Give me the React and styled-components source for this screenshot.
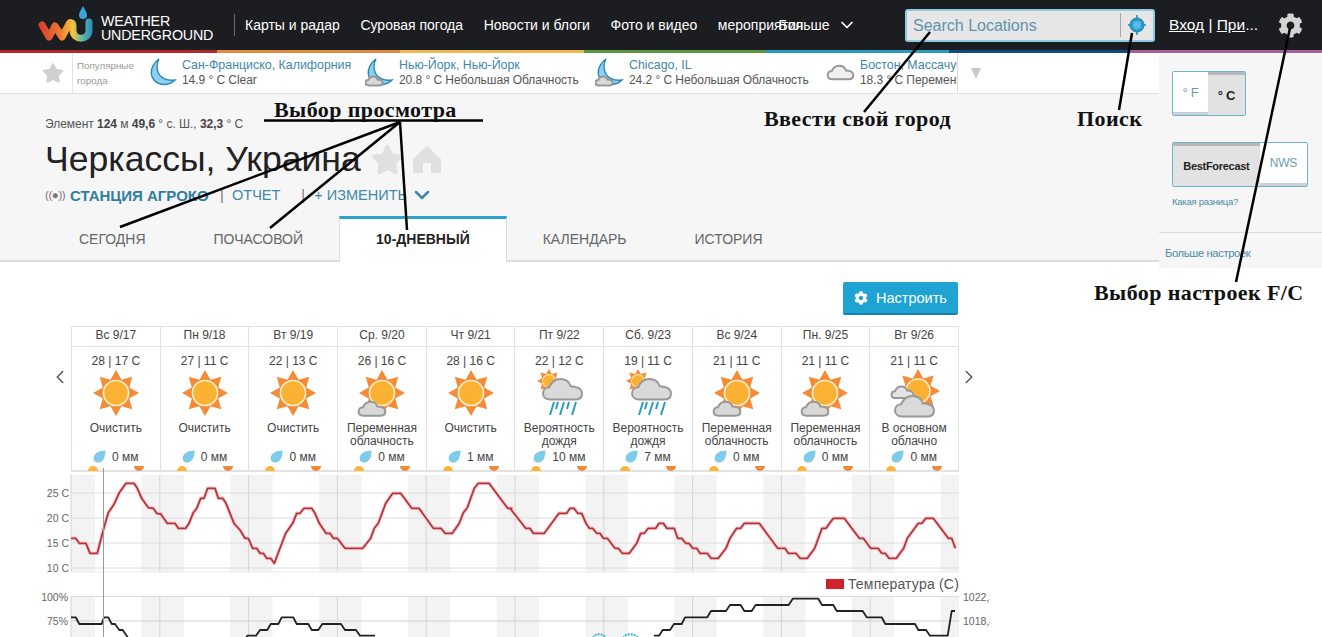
import React from "react";
import styled, { createGlobalStyle } from "styled-components";
import { ChevronDown, ChevronLeft, ChevronRight } from "lucide-react";
import { FaCog, FaStar } from "react-icons/fa";

const nav = ["Карты и радар", "Суровая погода", "Новости и блоги", "Фото и видео"];
const strip = [["#b0272d", 217], ["#de8a3f", 183], ["#eeb94f", 184], ["#5b9745", 182], ["#2b9cc0", 183], ["#0f4a87", 181], ["#a45f9c", 192]];

const cities = [
    { name: "Сан-Франциско, Калифорния", info: "14.9 ° C Clear", icon: "moon", width: 217 },
    { name: "Нью-Йорк, Нью-Йорк", info: "20.8 ° C Небольшая Облачность", icon: "moonCloud", width: 230 },
    { name: "Chicago, IL", info: "24.2 ° C Небольшая Облачность", icon: "moonCloud", width: 231 },
    { name: "Бостон, Массачусетс", info: "18.3 ° C Переменная", icon: "cloud", width: 200 },
];

const days = [
    { day: "Вс 9/17", temp: "28 | 17 C", icon: "clear", text: "Очистить", rain: "0 мм" },
    { day: "Пн 9/18", temp: "27 | 11 C", icon: "clear", text: "Очистить", rain: "0 мм" },
    { day: "Вт 9/19", temp: "22 | 13 C", icon: "clear", text: "Очистить", rain: "0 мм" },
    { day: "Ср. 9/20", temp: "26 | 16 C", icon: "partly", text: "Переменная облачность", rain: "0 мм" },
    { day: "Чт 9/21", temp: "28 | 16 C", icon: "clear", text: "Очистить", rain: "1 мм" },
    { day: "Пт 9/22", temp: "22 | 12 C", icon: "rain", text: "Вероятность дождя", rain: "10 мм" },
    { day: "Сб. 9/23", temp: "19 | 11 C", icon: "rain", text: "Вероятность дождя", rain: "7 мм" },
    { day: "Вс 9/24", temp: "21 | 11 C", icon: "partly", text: "Переменная облачность", rain: "0 мм" },
    { day: "Пн. 9/25", temp: "21 | 11 C", icon: "partly", text: "Переменная облачность", rain: "0 мм" },
    { day: "Вт 9/26", temp: "21 | 11 C", icon: "mostly", text: "В основном облачно", rain: "0 мм" },
];

// точки сняты с графика: x, y в координатах страницы
const z1 = (a) => a.map(([x, y]) => [40 + x / 3, 470 + y / 3]);
const z2 = (a) => a.map(([x, y]) => [510 + x / 3, 470 + y / 3]);

const tempLine = [
    ...z1([[93,205],[107,205],[118,220],[138,220],[150,250],[172,250],[190,180],[205,128],[222,103],[238,68],[258,40],[282,40],[292,55],[305,85],[325,113],[340,115],[350,130],[362,132],[382,160],[405,160],[415,175],[437,175],[447,160],[460,128],[470,115],[482,85],[492,85],[503,55],[525,55],[535,85],[548,85],[558,100],[582,160],[600,180],[615,205],[625,205],[638,235],[650,235],[660,250],[670,250],[680,265],[692,265],[703,280],[720,235],[737,190],[758,160],[770,130],[780,130],[792,115],[815,115],[825,130],[838,160],[858,190],[870,190],[880,205],[892,205],[915,235],[968,235],[992,205],[1003,175],[1015,160],[1037,100],[1058,70],[1082,70],[1115,115],[1137,115],[1180,175],[1203,175],[1215,190],[1237,190],[1258,160],[1270,128],[1282,113],[1303,55],[1315,40],[1347,40],[1403,115],[1415,115]]),
    ...z2([[0,115],[47,175],[60,175],[70,190],[103,190],[147,130],[170,130],[180,115],[192,115],[203,130],[215,130],[228,160],[238,175],[248,175],[260,190],[270,190],[280,205],[292,205],[315,235],[325,235],[337,250],[358,250],[380,220],[392,190],[403,190],[415,175],[437,175],[447,160],[460,160],[470,175],[493,175],[503,205],[515,205],[527,220],[537,220],[548,235],[560,235],[570,250],[592,250],[603,265],[625,265],[648,235],[660,205],[680,175],[692,175],[703,160],[748,160],[803,235],[825,235],[835,250],[858,250],[870,265],[892,265],[914,235],[936,175],[948,175],[970,145],[1003,145],[1048,205],[1060,205],[1082,235],[1104,235],[1115,250],[1126,250],[1137,265],[1159,265],[1181,235],[1192,205],[1225,160],[1236,160],[1247,145],[1270,145],[1315,205],[1325,205],[1336,235]]),
];

const pressureA = z1([[93,442],[107,442],[118,462],[185,462],[192,442],[205,442],[215,462],[225,462],[238,480],[248,480],[262,500],[270,520]]);
const pressureB = z1([[610,520],[622,497],[648,497],[660,480],[682,480],[692,462],[715,462],[725,442],[760,442],[770,462],[805,462],[815,480],[835,480],[847,462],[903,462],[915,480],[948,480],[960,497],[1005,497]]);
const pressureC = z2([[432,497],[447,497],[458,480],[480,480],[492,462],[515,462],[525,442],[592,442],[603,423],[648,423],[660,405],[692,405],[703,423],[725,423],[737,405],[836,405],[848,386],[925,386],[936,405],[970,405],[980,423],[1058,423],[1070,442],[1115,442],[1126,462],[1215,462],[1225,480],[1248,480],[1260,497],[1313,497],[1325,423],[1335,423]]);

const toPath = (pts, top) => pts.map(([x, y]) => `${(x - 71).toFixed(1)},${(y - top).toFixed(1)}`).join(" ");

const DAY = 88.8;
const dayIdx = [0, 1, 2, 3, 4, 5, 6, 7, 8, 9];

const GlobalStyle = createGlobalStyle`
    html, body { margin: 0; padding: 0; background: #fff; overflow: hidden; }
    body { font-family: "Liberation Sans", Arial, sans-serif; }
    a { text-decoration: none; }
`;

const Page = styled.div`
    position: relative;
    width: 1322px;
    height: 637px;
    overflow: hidden;
`;
const TopBar = styled.header`
    display: flex;
    align-items: center;
    height: 50px;
    background: #1c1d20;
    color: #fff;
    padding-left: 38px;
`;
const Brand = styled.div`
    display: flex;
    align-items: center;
    width: 196px;
    gap: 7px;
`;
const BrandName = styled.div`
    font-size: 14.3px;
    line-height: 14px;
    letter-spacing: -0.2px;
    padding-top: 5px;
`;
const NavList = styled.nav`
    display: flex;
    align-items: center;
    height: 22px;
    border-left: 1px solid #66686c;
    padding-left: 10px;
    gap: 20.6px;
    width: 659px;
    font-size: 14px;
    box-sizing: border-box;
`;
const NavItem = styled.span`
    white-space: nowrap;
`;
const NavOverflow = styled.span`
    white-space: nowrap;
    width: 40px;
`;
const MoreItem = styled.span`
    display: flex;
    align-items: center;
    gap: 7px;
    white-space: nowrap;
`;
const Search = styled.div`
    display: flex;
    align-items: center;
    width: 250px;
    height: 33px;
    box-sizing: border-box;
    background: #e6e6e6;
    border: 2px solid #8ecae3;
    border-radius: 3px;
    margin-left: 12px;
`;
const SearchInput = styled.span`
    flex: 1;
    color: #5f93ab;
    font-size: 16px;
    padding: 2px 0 0 6px;
`;
const SearchButton = styled.span`
    display: flex;
    align-items: center;
    justify-content: center;
    width: 32px;
    height: 24px;
    border-left: 1px solid #a9a9a9;
`;
const UserLinks = styled.div`
    margin-left: 14px;
    width: 106px;
    font-size: 15.5px;
    white-space: nowrap;
    a { color: #fff; text-decoration: underline; }
`;
const Gear = styled.span`
    display: flex;
    color: #d4d4d4;
    margin-left: 3px;
`;
const ColorStrip = styled.div`
    display: flex;
    height: 3px;
`;
const StripPart = styled.div`
    background: ${(p) => p.$color};
    width: ${(p) => p.$width}px;
`;
const Body = styled.div`
    display: grid;
    grid-template-columns: 1159px 163px;
    align-items: start;
`;
const CityBar = styled.div`
    display: flex;
    align-items: center;
    height: 40px;
    background: #fff;
`;
const CityStar = styled.span`
    display: flex;
    justify-content: flex-end;
    width: 72px;
    color: #cfcfcf;
    padding-right: 8px;
    box-sizing: border-box;
`;
const CityLabel = styled.div`
    display: flex;
    align-items: center;
    width: 76px;
    height: 40px;
    border-left: 1px solid #e4e4e4;
    box-sizing: border-box;
    padding-left: 4px;
    color: #999;
    font-size: 9.8px;
    line-height: 15px;
`;
const CityList = styled.div`
    display: flex;
    width: 810px;
    height: 40px;
    overflow: hidden;
    align-items: center;
    border-right: 1px solid #ddd;
    box-sizing: border-box;
`;
const City = styled.div`
    display: flex;
    align-items: center;
    flex: none;
    gap: 4px;
    width: ${(p) => p.$width}px;
`;
const CityText = styled.div`
    font-size: 12px;
    line-height: 15px;
    white-space: nowrap;
    color: #555;
    letter-spacing: -0.05px;
    a { color: #3f88a8; display: block; font-size: 12.4px; letter-spacing: 0; }
`;
const CityMore = styled.span`
    width: 0;
    height: 0;
    margin-left: 13px;
    border-left: 5px solid transparent;
    border-right: 5px solid transparent;
    border-top: 11px solid #c9c9c9;
`;
const Hero = styled.section`
    height: 169px;
    box-sizing: border-box;
    background: #f6f6f6;
    border-top: 1px solid #e0e0e0;
    border-bottom: 2px solid #ddd;
    padding: 23px 0 0 45px;
`;
const Meta = styled.div`
    font-size: 12px;
    line-height: 14px;
    color: #555;
    letter-spacing: -0.03px;
    b { color: #444; }
`;
const TitleRow = styled.div`
    display: flex;
    align-items: center;
    height: 40px;
    margin-top: 8px;
    gap: 9px;
    color: #e0e0e0;
`;
const Title = styled.h1`
    margin: 0 1px 0 0;
    font-size: 35.6px;
    font-weight: 400;
    color: #222;
    white-space: nowrap;
`;
const StationRow = styled.div`
    display: flex;
    align-items: center;
    height: 18px;
    margin-top: 7px;
    font-size: 14.5px;
    color: #3f88a8;
    white-space: nowrap;
`;
const Signal = styled.span`
    color: #777;
    font-size: 11.5px;
    letter-spacing: -0.4px;
    width: 25px;
`;
const Station = styled.b`
    color: #2f7e9f;
    font-size: 15px;
    width: 150px;
`;
const Sep = styled.span`
    color: #777;
    width: ${(p) => p.$width}px;
    margin-left: ${(p) => p.$left || 0}px;
`;
const EditChevron = styled(ChevronDown)`
    margin-left: 3px;
`;
const Tabs = styled.div`
    display: flex;
    margin: 12px 0 0 0;
    height: 46px;
`;
const Tab = styled.span`
    display: flex;
    align-items: center;
    justify-content: center;
    height: 46px;
    box-sizing: border-box;
    padding: ${(p) => (p.$active ? "0 36px 3px" : "0 34px")};
    margin: ${(p) => (p.$active ? "0 2px" : "0")};
    font-size: 14px;
    white-space: nowrap;
    color: ${(p) => (p.$active ? "#222" : "#666")};
    font-weight: ${(p) => (p.$active ? 700 : 400)};
    background: ${(p) => (p.$active ? "#fff" : "transparent")};
    border-top: ${(p) => (p.$active ? "3px solid #29a3c9" : "0")};
    border-left: ${(p) => (p.$active ? "1px solid #ddd" : "0")};
    border-right: ${(p) => (p.$active ? "1px solid #ddd" : "0")};
`;
const Forecast = styled.section`
    display: grid;
    grid-template-columns: 71px 888px 1fr;
`;
const Customize = styled.div`
    grid-column: 2;
    display: flex;
    justify-content: flex-end;
    padding: 20px 1px 11px 0;
`;
const CustomizeButton = styled.span`
    display: flex;
    align-items: center;
    gap: 8px;
    justify-content: center;
    width: 115px;
    height: 33px;
    box-sizing: border-box;
    border-bottom: 2px solid #1582ab;
    border-radius: 2px;
    background: #1ea3d3;
    color: #fff;
    font-size: 14.5px;
`;
const Arrow = styled.div`
    grid-column: ${(p) => (p.$right ? 3 : 1)};
    display: flex;
    align-items: flex-start;
    justify-content: ${(p) => (p.$right ? "flex-start" : "flex-end")};
    padding: 40px 0 0;
    margin-left: ${(p) => (p.$right ? "-1px" : "0")};
    color: #555;
`;
const DayTable = styled.div`
    grid-column: 2;
    display: grid;
    grid-template-columns: repeat(10, 1fr);
    border: 1px solid #e2e2e2;
    border-width: 1px 1px 2px 0;
    height: 146px;
    box-sizing: border-box;
`;
const DayCol = styled.div`
    display: flex;
    flex-direction: column;
    align-items: center;
    border-left: 1px solid #e2e2e2;
    min-width: 0;
    color: #444;
`;
const DayName = styled.div`
    width: 100%;
    height: 19px;
    line-height: 17px;
    text-align: center;
    font-size: 12px;
    border-bottom: 1px solid #e2e2e2;
`;
const DayTemp = styled.div`
    margin-top: 7px;
    font-size: 12px;
    line-height: 14px;
`;
const DayIcon = styled.div`
    height: 50px;
    margin-top: 1px;
`;
const DayText = styled.div`
    height: 28px;
    margin-top: 3px;
    width: 80px;
    text-align: center;
    font-size: 12px;
    line-height: 12.5px;
`;
const DayRain = styled.div`
    display: flex;
    align-items: center;
    justify-content: center;
    gap: 6px;
    height: 13px;
    font-size: 12px;
`;
const SunTimes = styled.div`
    display: flex;
    justify-content: space-between;
    width: 56px;
    margin-top: 3px;
`;
const HalfSun = styled.span`
    width: 10px;
    height: 5px;
    background: ${(p) => (p.$set ? "#ee8a3a" : "#f9b53c")};
    border-radius: ${(p) => (p.$set ? "0 0 6px 6px" : "6px 6px 0 0")};
`;
const Charts = styled.div`
    position: relative;
    grid-column: 2;
    padding-top: 3px;
`;
const ChartSvg = styled.svg`
    display: block;
    overflow: visible;
    width: 888px;
    height: ${(p) => p.$height}px;
    text {
        font-family: "Liberation Sans", Arial, sans-serif;
        font-size: 10.5px;
        fill: #666;
    }
`;
const Legend = styled.div`
    display: flex;
    justify-content: flex-end;
    align-items: center;
    gap: 4px;
    height: 24px;
    font-size: 14px;
    color: #555;
    letter-spacing: 0.2px;
`;
const LegendMark = styled.span`
    width: 18px;
    height: 10px;
    background: #d2202c;
`;
const Crosshair = styled.div`
    position: absolute;
    left: 32px;
    top: -4px;
    bottom: -60px;
    width: 1px;
    background: #999;
`;
const Settings = styled.aside`
    height: 215px;
    margin-top: 0;
    background: #f6f6f6;
    box-sizing: border-box;
    padding-top: 18px;
`;
const Toggle = styled.div`
    display: flex;
    height: 45px;
    width: ${(p) => p.$width}px;
    margin-left: 13px;
    box-sizing: border-box;
    border: 1px solid #6fb2c9;
    border-radius: 2px;
    overflow: hidden;
    margin-bottom: ${(p) => p.$gap}px;
`;
const ToggleSide = styled.span`
    display: flex;
    align-items: center;
    justify-content: center;
    width: ${(p) => p.$width}px;
    box-sizing: border-box;
    font-size: ${(p) => p.$size}px;
    font-weight: ${(p) => (p.$on ? 700 : 400)};
    letter-spacing: -0.3px;
    color: ${(p) => (p.$on ? "#222" : "#6d9db2")};
    background: ${(p) => (p.$on ? "#e2e2e2" : "#fff")};
    border-top: ${(p) => (p.$on ? "3px solid #b5b9bb" : "0")};
    border-bottom: ${(p) => (p.$on ? "0" : "3px solid #c8d2d6")};
`;
const Diff = styled.a`
    display: block;
    margin: 9px 0 0 13px;
    font-size: 9.5px;
    line-height: 12px;
    letter-spacing: -0.25px;
    color: #4a8aa5;
`;
const MoreSettings = styled.div`
    margin-top: 24px;
    padding: 14px 0 0 6px;
    border-top: 1px solid #dcdcdc;
    font-size: 11.2px;
    letter-spacing: -0.35px;
    color: #4a8aa5;
`;
const Notes = styled.svg`
    position: absolute;
    inset: 0;
    width: 1322px;
    height: 637px;
    pointer-events: none;
`;
const Note = styled.span`
    position: absolute;
    left: ${(p) => p.$x}px;
    top: ${(p) => p.$y}px;
    font-family: "Liberation Serif", "Times New Roman", serif;
    font-weight: 700;
    font-size: 22px;
    line-height: 24px;
    letter-spacing: 0.4px;
    color: #111;
    white-space: nowrap;
`;

const Logo = () => (
    <svg width="56" height="38" viewBox="38 5 56 38">
        <defs>
            <linearGradient id="wu" gradientUnits="userSpaceOnUse" x1="38" y1="0" x2="94" y2="0">
                <stop offset="0" stopColor="#d9382e" />
                <stop offset="0.4" stopColor="#ee7a33" />
                <stop offset="0.62" stopColor="#f6c33c" />
                <stop offset="0.8" stopColor="#5cb7a8" />
                <stop offset="1" stopColor="#1f82c9" />
            </linearGradient>
        </defs>
        <path d="M42 24 L49 36 L55 25 L62 36 L69 23 C70 21 73 21 73 25 V29 C73 40 89 40 89 29 V21" fill="none" stroke="url(#wu)" strokeWidth="7" strokeLinecap="round" strokeLinejoin="round" />
        <path d="M83 5 C81 9 79 11 79 14 A4 4 0 0 0 87 14 C87 11 85 9 83 5Z" fill="#3ba4d8" />
    </svg>
);

const Target = () => (
    <svg width="20" height="22" viewBox="0 0 20 22">
        <circle cx="10" cy="11" r="7" fill="#2a9bd1" stroke="#1f7fb0" />
        <circle cx="10" cy="11" r="4" fill="#57bce6" />
        <path d="M10 1V5M10 17V21M1 11H4M16 11H19" stroke="#2a88b8" strokeWidth="1.5" />
    </svg>
);

const HomeIcon = () => (
    <svg width="28" height="27" viewBox="0 0 28 27">
        <path d="M14 0L28 13V27H18V17H10V27H0V13Z" fill="#e0e0e0" />
    </svg>
);

const cloudPath = "M8 21 C3 21 1 18 1 15 C1 11 4 9 7 9 C9 4 13 1 18 1 C24 1 27 5 28 8 C33 8 39 10 39 15 C39 19 36 21 32 21Z";

const Cloud = ({ x, y, w, fill = "#d9d9d9" }) => {
    const s = w / 40;
    return (
        <path d={cloudPath} transform={`translate(${x} ${y}) scale(${s})`} fill={fill} stroke="#989898" strokeWidth="2" vectorEffect="non-scaling-stroke" />
    );
};

const Sun = ({ cx, cy, r }) => {
    const pts = [];
    for (let i = 0; i < 16; i++) {
        const a = (i * Math.PI) / 8 - Math.PI / 2;
        const rad = i % 2 === 0 ? r : r * 0.62;
        pts.push(`${(cx + rad * Math.cos(a)).toFixed(1)},${(cy + rad * Math.sin(a)).toFixed(1)}`);
    }
    return (
        <>
            <polygon points={pts.join(" ")} fill="#f58b37" />
            <circle cx={cx} cy={cy} r={r * 0.58} fill="#fdf0cf" />
            <circle cx={cx} cy={cy} r={r * 0.51} fill="#fbb232" />
        </>
    );
};

const WeatherIcon = ({ kind }) => (
    <svg width="60" height="50" viewBox="0 0 60 50">
        {kind === "clear" && <Sun cx={30} cy={24} r={23} />}
        {kind === "partly" && (
            <>
                <Sun cx={30} cy={24} r={23} />
                <Cloud x={6} y={32} w={28} />
            </>
        )}
        {kind === "rain" && (
            <>
                <Sun cx={20} cy={12} r={12} />
                <Cloud x={13} y={9} w={41} />
                <path d="M21 46L25 33M27 40L29 33M31 46L35 33M38 40L40 33M43 46L47 33" stroke="#2b9cc0" strokeWidth="2" />
            </>
        )}
        {kind === "mostly" && (
            <>
                <Sun cx={34} cy={22} r={22} />
                <Cloud x={7} y={17} w={23} fill="#e3e3e3" />
                <Cloud x={10} y={26} w={41} />
            </>
        )}
    </svg>
);

const moonPath = "M11 1 C3 7 1 16 6 22 C11 28 21 28 27 22 C19 23 12 20 10 14 C8 9 9 5 11 1Z";

const CityIcon = ({ kind }) => (
    <svg width="30" height="30" viewBox="0 0 30 30">
        {kind === "cloud" ? (
            <Cloud x={1} y={7} w={27} fill="#f0f0f0" />
        ) : (
            <path d={moonPath} fill="#8dd0ef" stroke="#2a88b5" strokeWidth="1.4" />
        )}
        {kind === "moonCloud" && <Cloud x={0} y={18} w={18} />}
    </svg>
);

const Drop = () => (
    <svg width="13" height="13" viewBox="0 0 14 14">
        <path d="M13.5 0.5 C8 0.8 2 2 0.8 8 C0 12 3.5 14 6.5 13.4 C12 12.5 13.5 6 13.5 0.5Z" fill="#7fcbea" />
    </svg>
);

const Bands = ({ height }) => (
    <>
        {dayIdx.map((i) => (
            <React.Fragment key={i}>
                <rect x={i * DAY} y="0" width="24" height={height} fill="#f3f3f3" />
                <rect x={i * DAY + 70.5} y="0" width="18.3" height={height} fill="#f3f3f3" />
            </React.Fragment>
        ))}
        {dayIdx.map((i) => (
            <line key={i} x1={i * DAY} x2={i * DAY} y1="0" y2={height} stroke="#d4d4d4" />
        ))}
    </>
);

const TempChart = () => (
    <ChartSvg $height={97} viewBox="0 0 888 97">
        <Bands height={97} />
        {[18, 43, 68, 93].map((y) => (
            <line key={y} x1="0" x2="888" y1={y} y2={y} stroke="#dcdcdc" />
        ))}
        <line x1="0" x2="888" y1="97" y2="97" stroke="#e8e8e8" />
        {[["25 C", 18], ["20 C", 43], ["15 C", 68], ["10 C", 93]].map(([t, y]) => (
            <text key={t} x="-2" y={y + 4} textAnchor="end">{t}</text>
        ))}
        <polyline points={toPath(tempLine, 475)} fill="none" stroke="#f6d4d4" strokeWidth="4" strokeLinejoin="round" />
        <polyline points={toPath(tempLine, 475)} fill="none" stroke="#b3323c" strokeWidth="1.8" strokeLinejoin="round" />
    </ChartSvg>
);

const HumidityChart = () => (
    <ChartSvg $height={41} viewBox="0 0 888 41">
        <defs>
            <clipPath id="axis-clip"><rect x="880" y="-5" width="39" height="50" /></clipPath>
        </defs>
        <Bands height={41} />
        <line x1="0" x2="888" y1="0.5" y2="0.5" stroke="#dcdcdc" />
        <line x1="0" x2="888" y1="25" y2="25" stroke="#cfcfcf" />
        <text x="-3" y="5" textAnchor="end">100%</text>
        <text x="-3" y="29" textAnchor="end">75%</text>
        <g clipPath="url(#axis-clip)">
            <text x="892" y="5">1022,3</text>
            <text x="892" y="29">1018,4</text>
        </g>
        <path d="M522 42 C524 37 532 37 535 42M552 42 C554 37 564 37 567 42" fill="none" stroke="#3fb0d8" strokeWidth="2" strokeDasharray="2 1" />
        {[pressureA, pressureB, pressureC].map((line, i) => (
            <polyline key={i} points={toPath(line, 596)} fill="none" stroke="#222" strokeWidth="1.8" strokeLinejoin="round" />
        ))}
    </ChartSvg>
);

const App = () => {
    return (
        <Page>
            <GlobalStyle />
            <TopBar>
                <Brand>
                    <Logo />
                    <BrandName>WEATHER<br />UNDERGROUND</BrandName>
                </Brand>
                <NavList>
                    {nav.map((item) => <NavItem key={item}>{item}</NavItem>)}
                    <NavOverflow>мероприятия</NavOverflow>
                    <MoreItem>Больше <ChevronDown size={20} strokeWidth={2} /></MoreItem>
                </NavList>
                <Search>
                    <SearchInput>Search Locations</SearchInput>
                    <SearchButton><Target /></SearchButton>
                </Search>
                <UserLinks><a>Вход</a> | <a>При</a>...</UserLinks>
                <Gear><FaCog size={25} /></Gear>
            </TopBar>
            <ColorStrip>
                {strip.map(([color, width]) => <StripPart key={color} $color={color} $width={width} />)}
            </ColorStrip>
            <Body>
                <main>
                    <CityBar>
                        <CityStar><FaStar size={22} /></CityStar>
                        <CityLabel><span>Популярные<br />города</span></CityLabel>
                        <CityList>
                            {cities.map((c) => (
                                <City key={c.name} $width={c.width}>
                                    <CityIcon kind={c.icon} />
                                    <CityText><a>{c.name}</a>{c.info}</CityText>
                                </City>
                            ))}
                        </CityList>
                        <CityMore />
                    </CityBar>
                    <Hero>
                        <Meta>Элемент <b>124</b> м <b>49,6</b> ° с. Ш., <b>32,3</b> ° С</Meta>
                        <TitleRow>
                            <Title>Черкассы, Украина</Title>
                            <FaStar size={33} />
                            <HomeIcon />
                        </TitleRow>
                        <StationRow>
                            <Signal>((●))</Signal>
                            <Station>СТАНЦИЯ АГРОКО</Station>
                            <Sep $width={12}>|</Sep>
                            <span>ОТЧЕТ</span>
                            <Sep $width={13} $left={21}>|</Sep>
                            <span>+ ИЗМЕНИТЬ</span>
                            <EditChevron size={24} strokeWidth={2.5} />
                        </StationRow>
                        <Tabs>
                            <Tab>СЕГОДНЯ</Tab>
                            <Tab>ПОЧАСОВОЙ</Tab>
                            <Tab $active>10-ДНЕВНЫЙ</Tab>
                            <Tab>КАЛЕНДАРЬ</Tab>
                            <Tab>ИСТОРИЯ</Tab>
                        </Tabs>
                    </Hero>
                    <Forecast>
                        <Customize>
                            <CustomizeButton><FaCog size={14} /> Настроить</CustomizeButton>
                        </Customize>
                        <Arrow><ChevronLeft size={22} strokeWidth={1.6} /></Arrow>
                        <DayTable>
                            {days.map((d) => (
                                <DayCol key={d.day}>
                                    <DayName>{d.day}</DayName>
                                    <DayTemp>{d.temp}</DayTemp>
                                    <DayIcon><WeatherIcon kind={d.icon} /></DayIcon>
                                    <DayText>{d.text}</DayText>
                                    <DayRain><Drop /> {d.rain}</DayRain>
                                    <SunTimes><HalfSun /><HalfSun $set /></SunTimes>
                                </DayCol>
                            ))}
                        </DayTable>
                        <Arrow $right><ChevronRight size={22} strokeWidth={1.6} /></Arrow>
                        <Charts>
                            <TempChart />
                            <Legend><LegendMark /> Температура (С)</Legend>
                            <HumidityChart />
                            <Crosshair />
                        </Charts>
                    </Forecast>
                </main>
                <Settings>
                    <Toggle $width={74} $gap={26}>
                        <ToggleSide $width={36} $size={13}>° F</ToggleSide>
                        <ToggleSide $width={38} $size={13} $on>° C</ToggleSide>
                    </Toggle>
                    <Toggle $width={136} $gap={0}>
                        <ToggleSide $width={88} $size={11} $on>BestForecast</ToggleSide>
                        <ToggleSide $width={48} $size={12}>NWS</ToggleSide>
                    </Toggle>
                    <Diff>Какая разница?</Diff>
                    <MoreSettings>Больше настроек</MoreSettings>
                </Settings>
            </Body>
            <Notes viewBox="0 0 1322 637">
                <g stroke="#000" fill="none" strokeWidth="2.5">
                    <path d="M264 120.5H483" />
                    <path d="M400 122L120 227M400 122L270 228M400 122L407 230" />
                    <path d="M930 32L864 112" />
                    <path d="M1132 33L1119 110" />
                    <path d="M1290 28L1236 282" />
                </g>
            </Notes>
            <Note $x={274} $y={98}>Выбор просмотра</Note>
            <Note $x={764} $y={107}>Ввести свой город</Note>
            <Note $x={1077} $y={107}>Поиск</Note>
            <Note $x={1094} $y={281}>Выбор настроек F/C</Note>
        </Page>
    );
};

export default App;
